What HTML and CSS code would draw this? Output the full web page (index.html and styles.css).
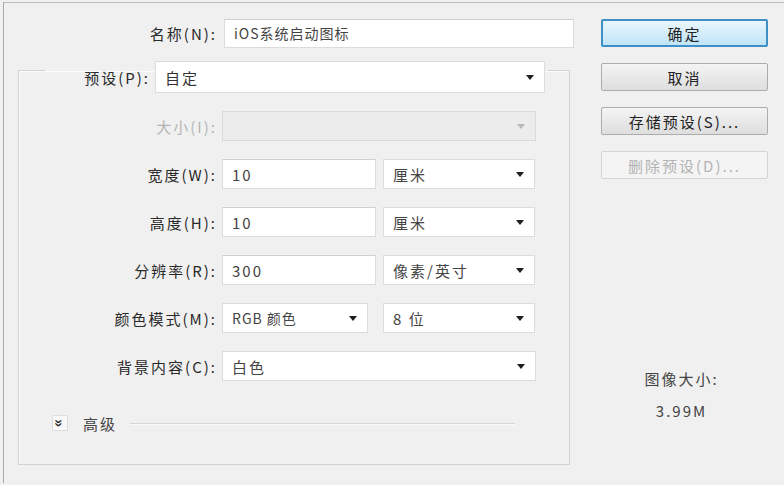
FILE: index.html
```html
<!DOCTYPE html>
<html lang="zh-CN">
<head>
<meta charset="UTF-8" />
<meta name="viewport" content="width=device-width, initial-scale=1.0" />
<title>新建</title>
<link rel="stylesheet" href="styles.css">
</head>
<body>
<div class="window">
  <div class="main">
    <div class="name-row">
      <label class="name-label">名称(N):</label>
      <div class="field name-field">iOS系统启动图标</div>
    </div>

    <fieldset class="group">
      <legend class="preset">
        <div class="preset-row">
          <label class="preset-label">预设(P):</label>
          <div class="select preset-select"><span>自定</span></div>
        </div>
      </legend>

      <div class="row">
        <label class="label disabled">大小(I):</label>
        <div class="select wide off"><span></span></div>
      </div>
      <div class="row">
        <label class="label">宽度(W):</label>
        <div class="field num">10</div>
        <div class="select unit"><span>厘米</span></div>
      </div>
      <div class="row">
        <label class="label">高度(H):</label>
        <div class="field num">10</div>
        <div class="select unit"><span>厘米</span></div>
      </div>
      <div class="row">
        <label class="label">分辨率(R):</label>
        <div class="field num">300</div>
        <div class="select unit"><span>像素/英寸</span></div>
      </div>
      <div class="row">
        <label class="label">颜色模式(M):</label>
        <div class="select mode"><span>RGB 颜色</span></div>
        <div class="select unit bits"><span>8 位</span></div>
      </div>
      <div class="row">
        <label class="label">背景内容(C):</label>
        <div class="select wide"><span>白色</span></div>
      </div>

      <div class="advanced">
        <div class="toggle">&raquo;</div>
        <span class="adv-text">高级</span>
        <div class="adv-line"></div>
      </div>
    </fieldset>
  </div>

  <div class="side">
    <div class="btn primary">确定</div>
    <div class="btn">取消</div>
    <div class="btn">存储预设(S)...</div>
    <div class="btn disabled-btn">删除预设(D)...</div>

    <div class="info">
      <div>图像大小:</div>
      <div>3.99M</div>
    </div>
  </div>
</div>
</body>
</html>
```

FILE: styles.css
```css
body {
  margin: 0;
  background: #f0f0f0;
  font-family: "Noto Sans CJK SC", "Noto Sans", sans-serif;
  font-size: 15px;
  letter-spacing: 2px;
  color: #2a2a2a;
}
.window {
  margin: 2px 0 0 3px;
  height: 480px;
  border-top: 1px solid #bdbdbd;
  border-left: 1px solid #a9a9a9;
  display: flex;
}
.main {
  width: 574px;
}
.name-row {
  display: flex;
  align-items: center;
  margin-top: 16px;
  height: 28px;
}
.name-label {
  width: 213px;
  text-align: right;
  margin-right: 7px;
}
.field {
  box-sizing: border-box;
  height: 30px;
  background: #fff;
  border: 1px solid #dcdcdc;
  border-top-color: #cfcfcf;
  display: flex;
  align-items: center;
  padding-left: 9px;
  color: #444;
}
.name-field {
  width: 350px;
  height: 29px;
  font-size: 14px;
  letter-spacing: 1px;
}

.group {
  margin: 14px 0 0 14px;
  padding: 0 0 32px 0;
  width: 552px;
  box-sizing: border-box;
  border: 1px solid #d2d2d2;
  box-shadow: inset 1px 1px 0 #fbfbfb;
}
.preset {
  margin-left: 26px;
  padding: 0 3px 0 0;
  height: 18px;
}
.preset-row {
  display: flex;
  align-items: center;
  height: 32px;
}
.preset-label {
  width: 105px;
  text-align: right;
  margin-right: 5px;
}
.select {
  box-sizing: border-box;
  height: 30px;
  background: #fff;
  border: 1px solid #dcdcdc;
  display: flex;
  align-items: center;
  padding: 0 10px 0 9px;
  color: #444;
}
.select::after {
  content: "";
  margin-left: auto;
  border-left: 4px solid transparent;
  border-right: 4px solid transparent;
  border-top: 5px solid #1e1e1e;
}
.preset-select {
  width: 390px;
  height: 32px;
  color: #333;
}
.select.off {
  background: #ececec;
  border-color: #dadada;
}
.select.off::after {
  border-top-color: #b8b8b8;
}

.row {
  display: flex;
  align-items: center;
  height: 30px;
  margin-bottom: 18px;
}
.group .row:first-of-type {
  margin-top: 32px;
}
.label {
  width: 198px;
  text-align: right;
  margin-right: 5px;
}
.label.disabled {
  color: #b5b5b5;
}
.wide {
  width: 314px;
}
.num {
  width: 154px;
}
.mode {
  width: 146px;
  font-size: 14px;
  letter-spacing: 1px;
}
.unit {
  width: 152px;
  margin-left: 7px;
}
.unit.bits {
  margin-left: 15px;
}

.advanced {
  display: flex;
  align-items: center;
  height: 18px;
  margin-top: 33px;
  padding-left: 33px;
}
.toggle {
  width: 16px;
  height: 16px;
  box-sizing: border-box;
  border: 1px solid #dedede;
  background: #f8f8f8;
  font-size: 15px;
  font-weight: bold;
  letter-spacing: 0;
  line-height: 13px;
  text-align: center;
  color: #222;
  transform: rotate(90deg);
}
.adv-text {
  margin-left: 15px;
  color: #444;
}
.adv-line {
  margin-left: 13px;
  width: 385px;
  height: 1px;
  background: #d6d6d6;
  box-shadow: 0 1px 0 #fafafa;
}

.side {
  margin-left: 23px;
  width: 167px;
  margin-top: 16px;
}
.btn {
  box-sizing: border-box;
  height: 28px;
  margin-bottom: 16px;
  border: 1px solid #acacac;
  border-radius: 2px;
  background: linear-gradient(#f4f4f4, #dedede);
  display: flex;
  align-items: center;
  justify-content: center;
  color: #222;
}
.btn.primary {
  border: 2px solid #3d8fc6;
  background: linear-gradient(#eaf6fd, #bfe4f7);
}
.btn.disabled-btn {
  border-color: #d4d4d4;
  background: #f4f4f4;
  color: #b3b3b3;
}
.info {
  margin-top: 184px;
  text-align: center;
  line-height: 32px;
  padding-right: 6px;
  color: #444;
}
```
